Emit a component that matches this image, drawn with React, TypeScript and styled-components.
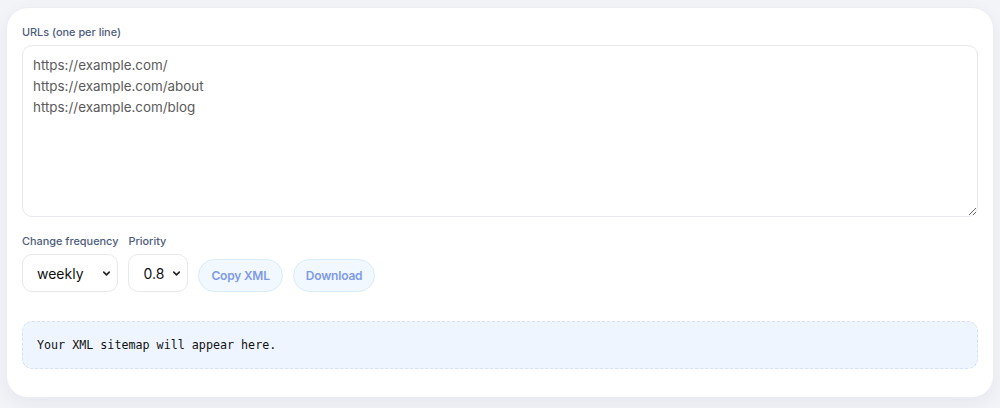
import React from 'react'
import styled, { createGlobalStyle } from 'styled-components'
import { ChevronDown } from 'lucide-react'

const GlobalStyle = createGlobalStyle`
  body {
    margin: 0;
    background: #f3f4f8;
    font-family: Inter, "Noto Sans", sans-serif;
  }
`

const Page = styled.div`
  padding: 7px 6px 11px;
`

const Card = styled.section`
  background: #fff;
  border: 1px solid #eceef2;
  border-radius: 22px;
  box-shadow: 0 6px 18px rgba(30, 40, 90, 0.06);
  padding: 17px 15px 28px;
  display: flex;
  flex-direction: column;
`

const Label = styled.label`
  display: block;
  font-size: 10.9px;
  font-weight: 500;
  color: #4c5c7c;
  line-height: 14px;
  margin-bottom: 6px;
`

const Urls = styled.textarea`
  box-sizing: border-box;
  width: 100%;
  height: 172px;
  border: 1px solid #e7e9ee;
  border-radius: 10px;
  padding: 9px 10px;
  font-family: Inter, "Noto Sans", sans-serif;
  font-size: 13.4px;
  line-height: 21px;
  color: #5a5a5a;
  resize: vertical;
  outline: none;
`

const Controls = styled.div`
  display: flex;
  align-items: flex-end;
  gap: 10px;
  margin-top: 17px;
`

const Field = styled.div`
  display: flex;
  flex-direction: column;
`

const SelectWrap = styled.div<{ $w: number }>`
  position: relative;
  width: ${p => p.$w}px;
  svg {
    position: absolute;
    right: 6px;
    top: 14px;
    pointer-events: none;
    color: #222;
  }
`

const Select = styled.select`
  appearance: none;
  box-sizing: border-box;
  width: 100%;
  height: 38px;
  border: 1px solid #e7e9ee;
  border-radius: 10px;
  background: #fff;
  padding: 0 0 0 14px;
  font-family: Inter, "Noto Sans", sans-serif;
  font-size: 14px;
  color: #111;
  outline: none;
`

const Action = styled.button`
  height: 33px;
  padding: 0 12px;
  border-radius: 17px;
  border: 1px solid #d9ecfc;
  background: #f1f8ff;
  color: #7f9ae8;
  font-family: Inter, "Noto Sans", sans-serif;
  font-size: 12px;
  font-weight: 600;
  letter-spacing: -0.2px;
  cursor: default;
`

const Output = styled.pre`
  margin: 29px 0 0;
  box-sizing: border-box;
  height: 48px;
  border: 1px dashed #d6e0f0;
  border-radius: 10px;
  background: #eef5ff;
  padding: 14px 14px;
  font-family: "DejaVu Sans Mono", "Liberation Mono", monospace;
  font-size: 11.7px;
  line-height: 18px;
  color: #111;
`

export default function App() {
  return (
    <Page>
      <GlobalStyle />
      <Card>
        <Label htmlFor="urls">URLs (one per line)</Label>
        <Urls
          id="urls"
          defaultValue={'https://example.com/\nhttps://example.com/about\nhttps://example.com/blog'}
        />
        <Controls>
          <Field>
            <Label>Change frequency</Label>
            <SelectWrap $w={96}>
              <Select defaultValue="weekly">
                <option>always</option>
                <option>hourly</option>
                <option>daily</option>
                <option>weekly</option>
                <option>monthly</option>
                <option>yearly</option>
                <option>never</option>
              </Select>
              <ChevronDown size={11} strokeWidth={3.5} />
            </SelectWrap>
          </Field>
          <Field>
            <Label>Priority</Label>
            <SelectWrap $w={60}>
              <Select defaultValue="0.8">
                <option>1.0</option>
                <option>0.8</option>
                <option>0.5</option>
                <option>0.3</option>
              </Select>
              <ChevronDown size={11} strokeWidth={3.5} />
            </SelectWrap>
          </Field>
          <Action>Copy XML</Action>
          <Action>Download</Action>
        </Controls>
        <Output>Your XML sitemap will appear here.</Output>
      </Card>
    </Page>
  )
}
